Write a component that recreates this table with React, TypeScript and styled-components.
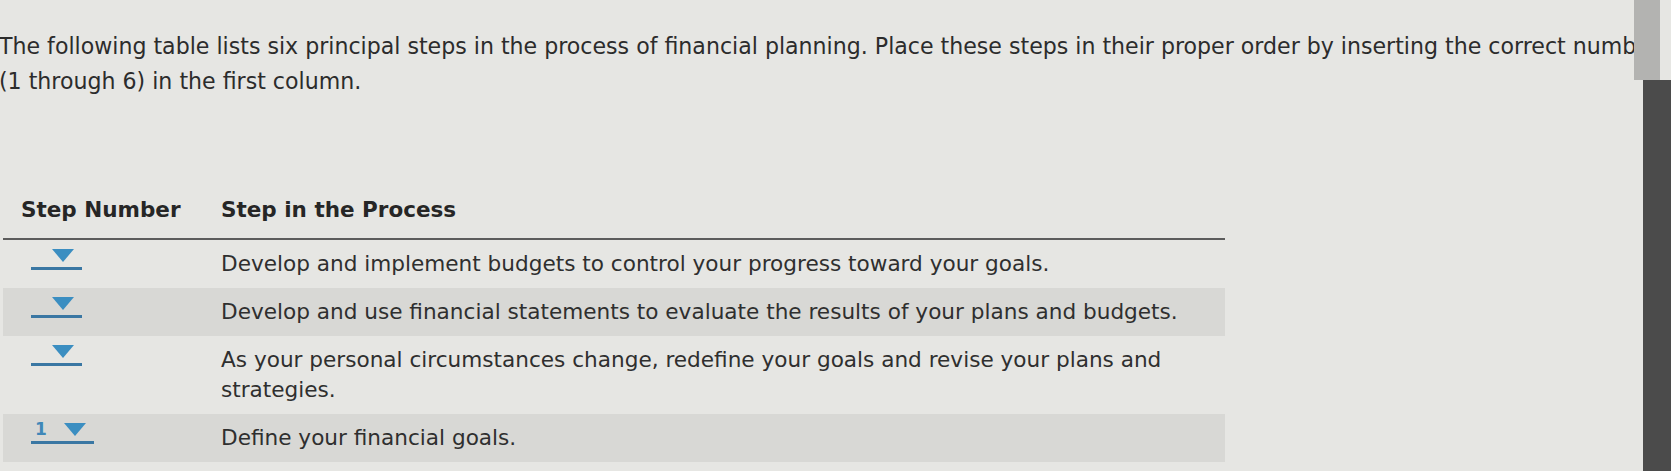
import React from "react";
import styled, { createGlobalStyle } from "styled-components";

const Global = createGlobalStyle`
  html, body { margin: 0; padding: 0; background: #e6e6e3; }
  body { font-family: "DejaVu Sans", Verdana, sans-serif; color: #2f2f2f; overflow: hidden; }
`;

const Screen = styled.div`
  display: flex;
  width: 1671px;
  height: 471px;
  overflow: hidden;
  background: #e6e6e3;
`;

const Main = styled.main`
  flex: 1;
  min-width: 0;
  overflow: hidden;
  padding-top: 29px;
`;

const Intro = styled.p`
  margin: 0 0 0 -1px;
  font-size: 22.1px;
  line-height: 35px;
  white-space: nowrap;
  color: #2c2c2c;
`;

const Table = styled.div`
  margin: 98px 0 0 3px;
  width: 1222px;
`;

const HeaderRow = styled.div`
  display: grid;
  grid-template-columns: 218px 1fr;
  border-bottom: 2px solid #5c5c5c;
  padding-bottom: 15px;
`;

const HeadCell = styled.div<{ $pad: number }>`
  font-weight: bold;
  font-size: 21.5px;
  line-height: 26px;
  padding-left: ${(p) => p.$pad}px;
  color: #262626;
`;

const Row = styled.div<{ $shaded?: boolean }>`
  display: grid;
  grid-template-columns: 218px 1fr;
  background: ${(p) => (p.$shaded ? "#d8d8d5" : "transparent")};
  padding: 9px 0;
`;

const NumCell = styled.div`
  display: flex;
  align-items: flex-start;
  padding-left: 28px;
`;

const StepCell = styled.div`
  font-size: 21.6px;
  line-height: 30px;
  padding-right: 20px;
  color: #2f2f2f;
`;

const Select = styled.span`
  display: inline-flex;
  align-items: center;
  gap: 17px;
  padding: 0 8px 5px 4px;
  border-bottom: 3px solid #3a77a3;
`;

const Value = styled.span`
  font-weight: bold;
  font-size: 17px;
  line-height: 13px;
  color: #3f87b8;
`;

const Scrollbar = styled.div`
  width: 37px;
  flex-shrink: 0;
  display: flex;
  flex-direction: column;
`;

const Thumb = styled.div`
  height: 80px;
  margin-right: 11px;
  background: #b3b3b1;
`;

const Track = styled.div`
  flex: 1;
  margin-left: 9px;
  background: #4b4b4b;
`;

const Caret = () => (
  <svg width="22" height="13" viewBox="0 0 22 13" aria-hidden="true" style={{ display: "block" }}>
    <path d="M0 0 H22 L11 13 Z" fill="#3b8ec1" />
  </svg>
);

const Dropdown = ({ value }: { value?: string }) => (
  <Select>
    <Value>{value ?? ""}</Value>
    <Caret />
  </Select>
);

const steps: { value?: string; text: React.ReactNode }[] = [
  { text: "Develop and implement budgets to control your progress toward your goals." },
  { text: "Develop and use financial statements to evaluate the results of your plans and budgets." },
  {
    text: (
      <>
        As your personal circumstances change, redefine your goals and revise your plans and
        <br />
        strategies.
      </>
    ),
  },
  { value: "1", text: "Define your financial goals." },
  { text: "Implement your financial plans and strategies." },
  { text: "Develop financial plans and strategies to achieve your goals." },
];

export default function App() {
  return (
    <>
      <Global />
      <Screen>
        <Main>
          <Intro>
            The following table lists six principal steps in the process of financial planning. Place these steps in their proper order by inserting the correct number
            <br />
            (1 through 6) in the first column.
          </Intro>
          <Table>
            <HeaderRow>
              <HeadCell $pad={18}>Step Number</HeadCell>
              <HeadCell $pad={0}>Step in the Process</HeadCell>
            </HeaderRow>
            {steps.map((s, i) => (
              <Row key={i} $shaded={i % 2 === 1}>
                <NumCell>
                  <Dropdown value={s.value} />
                </NumCell>
                <StepCell>{s.text}</StepCell>
              </Row>
            ))}
          </Table>
        </Main>
        <Scrollbar>
          <Thumb />
          <Track />
        </Scrollbar>
      </Screen>
    </>
  );
}
